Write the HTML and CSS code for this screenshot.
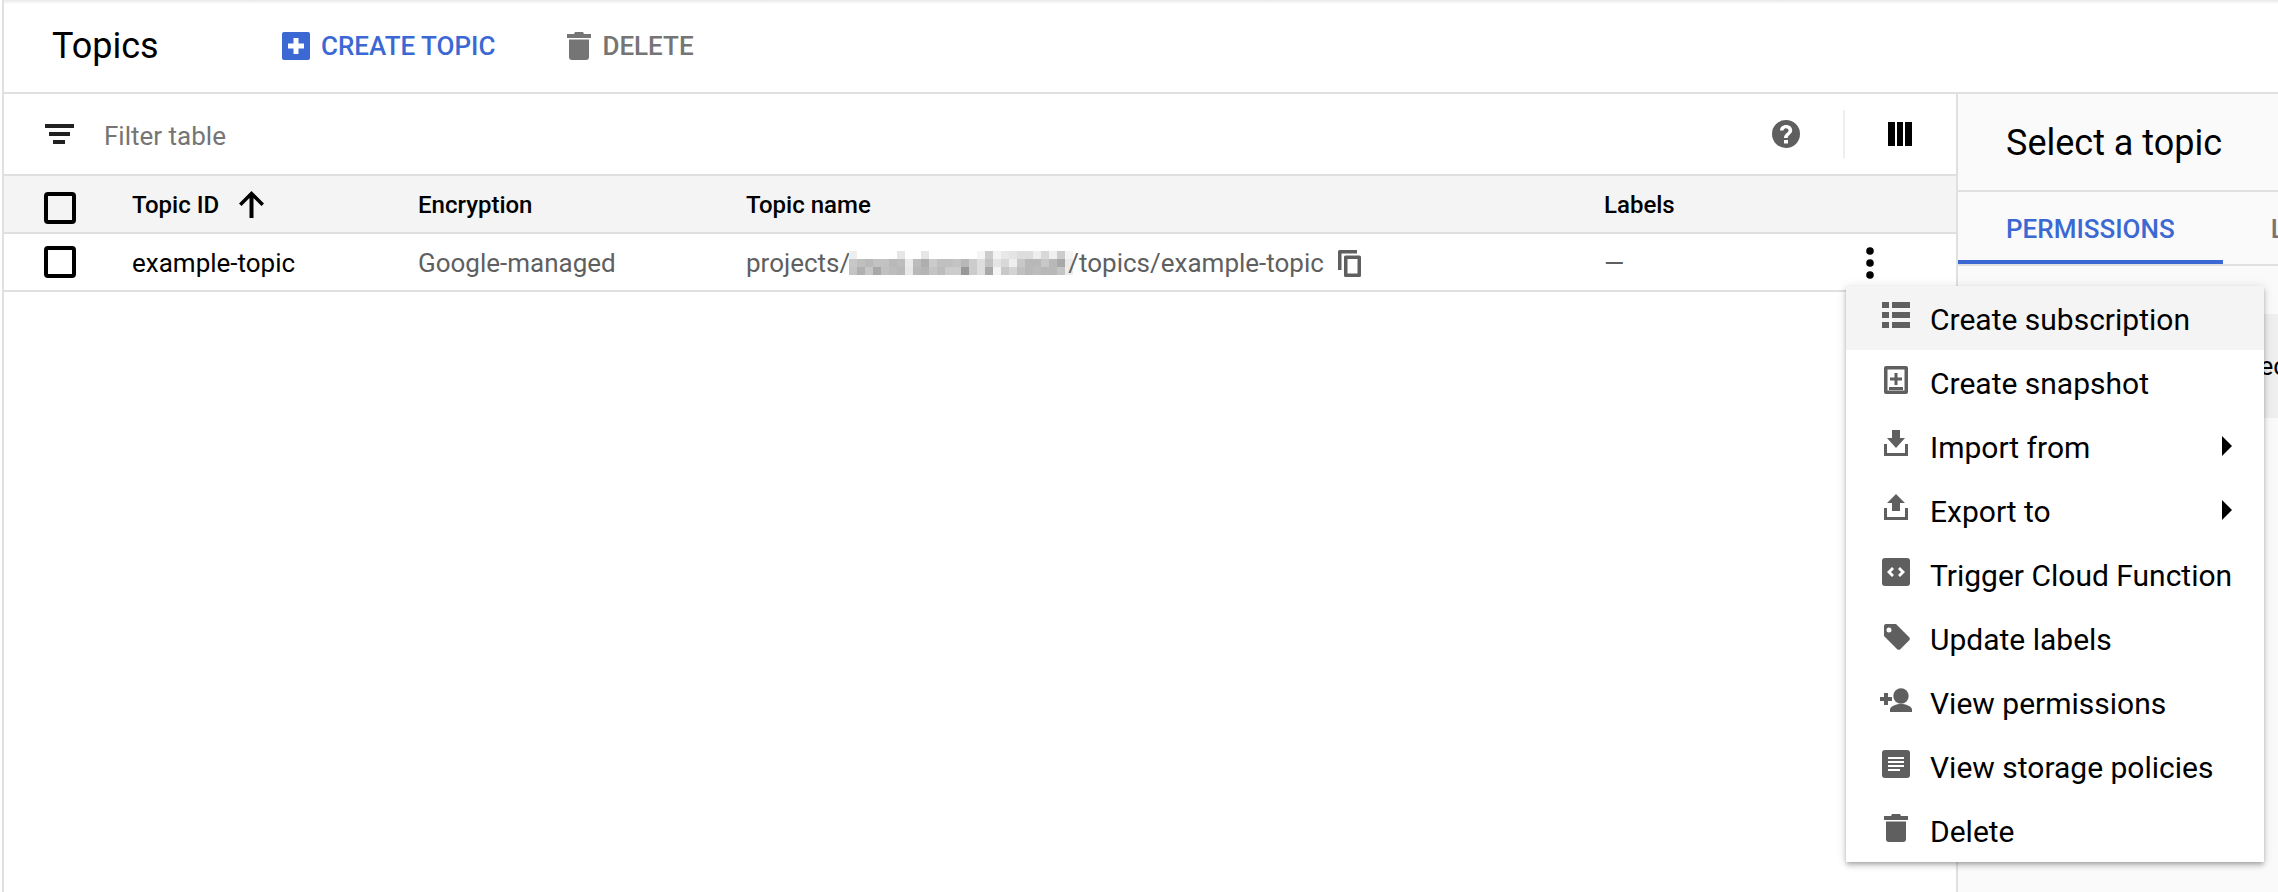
FILE: index.html
```html
<!DOCTYPE html>
<html lang="en">
<head>
  <meta charset="UTF-8" />
  <link rel="stylesheet" href="styles.css">
  <title>Topics</title>
</head>
<body>
<div class="page">
  <header class="topbar">
    <h1>Topics</h1>
    <button class="action action-create">
      <svg class="create-icon" viewBox="0 0 28 28"><path fill="#3b68d3" d="M2 0h24a2 2 0 0 1 2 2v24a2 2 0 0 1-2 2H2a2 2 0 0 1-2-2V2a2 2 0 0 1 2-2z"/><path fill="#fff" d="M11.500 6h5v5.500H22v5h-5.500V22h-5v-5.500H6v-5h5.500z"/></svg>
      CREATE TOPIC
    </button>
    <button class="action action-delete">
      <svg class="delete-icon" viewBox="0 0 24 28"><path fill="#757575" d="M8 0h8l1 2h7v4H0V2h7zM2 7.500h20V25a3 3 0 0 1-3 3H5a3 3 0 0 1-3-3z"/></svg>
      DELETE
    </button>
  </header>

  <div class="content">
    <main class="table-area">
      <div class="filter-bar">
        <svg class="filter-icon" viewBox="0 0 29 20"><path fill="#212121" d="M0 0h29v4H0zM4 8h21v4H4zM8 16h12v4H8z"/></svg>
        <span class="filter-text">Filter table</span>
        <svg class="help-icon" viewBox="0 0 28 28"><path fill="#5f5f5f" fill-rule="evenodd" d="M14 0a14 14 0 1 1 0 28 14 14 0 0 1 0-28zm-2 20v3.500h4V20zM14 5c-3.500 0-6 2.300-6 5.500h3.500c0-1.300 1-2.300 2.500-2.300s2.500 1 2.500 2.200c0 2.600-4.500 2.900-4.500 7.600h3.700c0-3.300 4.500-4 4.500-7.600C20.200 7.200 17.700 5 14 5z"/></svg>
        <span class="filter-sep"></span>
        <svg class="columns-icon" viewBox="0 0 24 24"><path fill="#000" d="M0 0h7v24H0zM9 0h6v24H9zM17 0h7v24h-7z"/></svg>
      </div>

      <div class="row row-head">
        <div class="cell-check"><span class="checkbox"></span></div>
        <div class="cell-id">Topic ID
          <svg class="sort-icon" viewBox="0 0 25 27"><path fill="#000" d="M10.500 27V7l-8 8L0 12.500 12.500 0 25 12.500 22.500 15l-8-8v20z"/></svg>
        </div>
        <div class="cell-enc">Encryption</div>
        <div class="cell-name">Topic name</div>
        <div class="cell-labels">Labels</div>
      </div>

      <div class="row row-body">
        <div class="cell-check"><span class="checkbox"></span></div>
        <div class="cell-id id-value">example-topic</div>
        <div class="cell-enc">Google-managed</div>
        <div class="cell-name">projects/<svg class="blurred" viewBox="0 0 224 24" shape-rendering="crispEdges">
            <!-- pixelated project id -->
            <rect x="0" y="0" width="8" height="8" fill="#eee"/><rect x="48" y="0" width="8" height="8" fill="#e6e6e6"/><rect x="72" y="0" width="8" height="8" fill="#e6e6e6"/><rect x="128" y="0" width="8" height="8" fill="#f5f5f5"/><rect x="136" y="0" width="8" height="8" fill="#ccc"/><rect x="144" y="0" width="8" height="8" fill="#f3f3f3"/><rect x="152" y="0" width="8" height="8" fill="#e8e8e8"/><rect x="160" y="0" width="8" height="8" fill="#e4e4e4"/><rect x="168" y="0" width="16" height="8" fill="#ddd"/><rect x="184" y="0" width="8" height="8" fill="#eee"/><rect x="192" y="0" width="8" height="8" fill="#d8d8d8"/><rect x="200" y="0" width="8" height="8" fill="#f0f0f0"/><rect x="208" y="0" width="8" height="8" fill="#ccc"/><rect x="216" y="0" width="8" height="8" fill="#f4f4f4"/>
            <rect x="0" y="8" width="8" height="8" fill="#c8c8c8"/><rect x="8" y="8" width="8" height="8" fill="#bfbfbf"/><rect x="16" y="8" width="8" height="8" fill="#b9b9b9"/><rect x="24" y="8" width="16" height="8" fill="#c2c2c2"/><rect x="40" y="8" width="8" height="8" fill="#b9b9b9"/><rect x="48" y="8" width="8" height="8" fill="#bcbcbc"/><rect x="56" y="8" width="8" height="8" fill="#eaeaea"/><rect x="64" y="8" width="8" height="8" fill="#bcbcbc"/><rect x="72" y="8" width="8" height="8" fill="#aeaeae"/><rect x="80" y="8" width="8" height="8" fill="#cbcbcb"/><rect x="88" y="8" width="16" height="8" fill="#c0c0c0"/><rect x="104" y="8" width="8" height="8" fill="#c4c4c4"/><rect x="112" y="8" width="8" height="8" fill="#b8b8b8"/><rect x="120" y="8" width="8" height="8" fill="#ccc"/><rect x="128" y="8" width="8" height="8" fill="#ddd"/><rect x="136" y="8" width="8" height="8" fill="#c2c2c2"/><rect x="144" y="8" width="8" height="8" fill="#e4e4e4"/><rect x="152" y="8" width="8" height="8" fill="#d8d8d8"/><rect x="160" y="8" width="8" height="8" fill="#eee"/><rect x="168" y="8" width="8" height="8" fill="#c8c8c8"/><rect x="176" y="8" width="16" height="8" fill="#b8b8b8"/><rect x="192" y="8" width="8" height="8" fill="#c8c8c8"/><rect x="200" y="8" width="8" height="8" fill="#b8b8b8"/><rect x="208" y="8" width="8" height="8" fill="#a8a8a8"/><rect x="216" y="8" width="8" height="8" fill="#eaeaea"/>
            <rect x="0" y="16" width="8" height="8" fill="#c4c4c4"/><rect x="8" y="16" width="8" height="8" fill="#b0b0b0"/><rect x="16" y="16" width="8" height="8" fill="#c6c6c6"/><rect x="24" y="16" width="8" height="8" fill="#a8a8a8"/><rect x="32" y="16" width="8" height="8" fill="#c0c0c0"/><rect x="40" y="16" width="8" height="8" fill="#bcbcbc"/><rect x="48" y="16" width="8" height="8" fill="#b8b8b8"/><rect x="56" y="16" width="8" height="8" fill="#e8e8e8"/><rect x="64" y="16" width="8" height="8" fill="#b8b8b8"/><rect x="72" y="16" width="8" height="8" fill="#b4b4b4"/><rect x="80" y="16" width="8" height="8" fill="#c4c4c4"/><rect x="88" y="16" width="8" height="8" fill="#bcbcbc"/><rect x="96" y="16" width="16" height="8" fill="#ccc"/><rect x="112" y="16" width="8" height="8" fill="#989898"/><rect x="120" y="16" width="8" height="8" fill="#ccc"/><rect x="128" y="16" width="8" height="8" fill="#ddd"/><rect x="136" y="16" width="8" height="8" fill="#a8a8a8"/><rect x="144" y="16" width="8" height="8" fill="#f4f4f4"/><rect x="152" y="16" width="8" height="8" fill="#c8c8c8"/><rect x="160" y="16" width="8" height="8" fill="#d4d4d4"/><rect x="168" y="16" width="8" height="8" fill="#c0c0c0"/><rect x="176" y="16" width="8" height="8" fill="#b8b8b8"/><rect x="184" y="16" width="8" height="8" fill="#bcbcbc"/><rect x="192" y="16" width="16" height="8" fill="#b8b8b8"/><rect x="208" y="16" width="8" height="8" fill="#c4c4c4"/><rect x="216" y="16" width="8" height="8" fill="#ececec"/>
          </svg>/topics/example-topic
          <svg class="copy-icon" viewBox="0 0 23 27"><path fill="#5f5f5f" d="M1.500 0H19v3.500H3.500V20H0V1.500A1.500 1.500 0 0 1 1.500 0z"/><path fill="#5f5f5f" fill-rule="evenodd" d="M7.500 5.500h14A1.500 1.500 0 0 1 23 7v18.500a1.500 1.500 0 0 1-1.500 1.500h-14A1.500 1.500 0 0 1 6 25.500V7a1.500 1.500 0 0 1 1.500-1.500zm2 3.500v14.500h10V9z"/></svg>
        </div>
        <div class="cell-labels">—</div>
        <svg class="more-icon" viewBox="0 0 8 32"><circle cx="4" cy="4" r="3.800"/><circle cx="4" cy="16" r="3.800"/><circle cx="4" cy="28" r="3.800"/></svg>
      </div>
    </main>

    <aside class="side-panel">
      <div class="side-title">Select a topic</div>
      <div class="side-tabs">
        <div class="tab tab-active">PERMISSIONS</div>
        <div class="tab">LABELS</div>
      </div>
      <div class="side-info">Selected</div>
    </aside>
  </div>

  <div class="menu">
    <div class="menu-item menu-item-hover">
      <svg class="menu-icon" viewBox="-2 0 32 28"><path d="M0 0h7v6H0zM10 0h18v6H10zM0 10h7v6H0zM10 10h18v6H10zM0 20h7v6H0zM10 20h18v6H10z"/></svg>
      Create subscription
    </div>
    <div class="menu-item">
      <svg class="menu-icon" viewBox="-2 0 32 28"><path fill-rule="evenodd" d="M4 0h20a2 2 0 0 1 2 2v24a2 2 0 0 1-2 2H4a2 2 0 0 1-2-2V2a2 2 0 0 1 2-2zm1.500 3.500v21h17v-21zm7 3.500h3v4.500H20v3h-4.500V19h-3v-4.500H8v-3h4.500zM7 21h14v3H7z"/></svg>
      Create snapshot
    </div>
    <div class="menu-item">
      <svg class="menu-icon" viewBox="-2 0 32 28"><path d="M10 0h8v8h5l-9 10L5 8h5zM2 14h3v9h18v-9h3v12H2z"/></svg>
      Import from
      <span class="submenu-arrow"></span>
    </div>
    <div class="menu-item">
      <svg class="menu-icon" viewBox="-2 0 32 28"><path d="M14 0l9 9h-5v8h-8V9H5zM2 14h3v9h18v-9h3v12H2z"/></svg>
      Export to
      <span class="submenu-arrow"></span>
    </div>
    <div class="menu-item">
      <svg class="menu-icon" viewBox="-2 0 32 28"><path fill-rule="evenodd" d="M3 0h22a3 3 0 0 1 3 3v22a3 3 0 0 1-3 3H3a3 3 0 0 1-3-3V3a3 3 0 0 1 3-3zm7 9l-5 5 5 5 2-2-3-3 3-3zm8 0l-2 2 3 3-3 3 2 2 5-5z"/></svg>
      Trigger Cloud Function
    </div>
    <div class="menu-item">
      <svg class="menu-icon" viewBox="-2 0 32 28"><path fill-rule="evenodd" d="M4 2h10l13 13a2.500 2.500 0 0 1 0 3.500L18.500 27a2.500 2.500 0 0 1-3.500 0L2 14V4a2 2 0 0 1 2-2zm3 3.500a2.500 2.500 0 1 0 0 5 2.500 2.500 0 0 0 0-5z"/></svg>
      Update labels
    </div>
    <div class="menu-item">
      <svg class="menu-icon" viewBox="-2 0 32 28"><circle cx="19" cy="10" r="7.700"/><path d="M8 26v-2.500c0-3.500 7-5.500 11-5.500s11 2 11 5.500V26zM2 7h4v4h4v4H6v4H2v-4h-4v-4h4z"/></svg>
      View permissions
    </div>
    <div class="menu-item">
      <svg class="menu-icon" viewBox="-2 0 32 28"><path fill-rule="evenodd" d="M3 0h22a3 3 0 0 1 3 3v22a3 3 0 0 1-3 3H3a3 3 0 0 1-3-3V3a3 3 0 0 1 3-3zm3 7v2h16V7zm0 4v2h16v-2zm0 4v2h16v-2zm0 4v2h12v-2z"/></svg>
      View storage policies
    </div>
    <div class="menu-item">
      <svg class="menu-icon" viewBox="-2 0 32 28"><path d="M10 0h8l1 2h7v4H2V2h7zM4 7.500h20V25a3 3 0 0 1-3 3H7a3 3 0 0 1-3-3z"/></svg>
      Delete
    </div>
  </div>
</div>
</body>
</html>
```

FILE: styles.css
```css
* {
  box-sizing: border-box;
}

body {
  margin: 0;
  font-family: Roboto, 'Liberation Sans', Arial, sans-serif;
  color: #000;
  background: #fff;
}

.page {
  position: relative;
  height: 892px;
  margin-left: 2px;
  overflow: hidden;
  border-left: 2px solid #e0e0e0;
}

/* Top bar */
.topbar {
  display: flex;
  align-items: center;
  height: 94px;
  padding-left: 48px;
  background: linear-gradient(#e8e8e8, #fff 4px);
  border-bottom: 2px solid #e0e0e0;
}

.topbar h1 {
  width: 230px;
  margin: 0;
  font-size: 36px;
  font-weight: 400;
}

.action {
  display: flex;
  align-items: center;
  padding: 0;
  border: none;
  background: none;
  font-family: inherit;
  font-size: 26px;
  font-weight: 500;
}

.action-create {
  gap: 11px;
  color: #3b68d3;
}

.create-icon {
  width: 28px;
  height: 28px;
}

.action-delete {
  gap: 11px;
  margin-left: 72px;
  color: #757575;
}

.delete-icon {
  width: 24px;
  height: 28px;
}

/* Main content */
.content {
  display: flex;
  height: 798px;
}

.table-area {
  width: 1952px;
  flex: none;
}

.filter-bar {
  display: flex;
  align-items: center;
  height: 82px;
  padding-left: 41px;
  border-bottom: 2px solid #e0e0e0;
}

.filter-icon {
  width: 29px;
  height: 20px;
}

.filter-text {
  flex: 1;
  margin-left: 30px;
  padding-top: 3px;
  color: #757575;
  font-size: 26px;
}

.help-icon {
  width: 28px;
  height: 28px;
}

.filter-sep {
  width: 2px;
  height: 48px;
  margin: 0 43px;
  background: #eee;
}

.columns-icon {
  width: 24px;
  height: 24px;
  margin-right: 44px;
}

/* Table rows */
.row {
  display: flex;
  align-items: center;
  height: 58px;
  padding-top: 2px;
  padding-left: 40px;
  border-bottom: 2px solid #e0e0e0;
}

.row-head {
  background: #f4f4f4;
  font-size: 24px;
  font-weight: 500;
}

.row-head .checkbox {
  margin-top: 5px;
}

.row-body {
  color: #5f5f5f;
  font-size: 26px;
}

.row-body .checkbox {
  margin-top: -2px;
}

.cell-check {
  display: flex;
  flex: none;
  width: 88px;
}

.checkbox {
  width: 32px;
  height: 32px;
  border: 4px solid #000;
  border-radius: 4px;
}

.cell-id {
  display: flex;
  flex: none;
  align-items: center;
  width: 286px;
}

.id-value {
  color: #000;
}

.sort-icon {
  width: 25px;
  height: 27px;
  margin: -2px 0 0 20px;
}

.cell-enc {
  flex: none;
  width: 328px;
}

.cell-name {
  display: flex;
  flex: none;
  align-items: center;
  width: 858px;
}

.blurred {
  width: 224px;
  height: 24px;
  margin: 0 -5px 0 -1px;
}

.copy-icon {
  width: 23px;
  height: 27px;
  margin-left: 14px;
}

.cell-labels {
  flex: none;
  width: 262px;
}

.more-icon {
  flex: none;
  width: 8px;
  height: 32px;
}

/* Side panel */
.side-panel {
  flex: 1;
  min-width: 0;
  background: #fafafa;
  border-left: 2px solid #e0e0e0;
}

.side-title {
  display: flex;
  align-items: center;
  height: 98px;
  padding: 2px 0 0 48px;
  border-bottom: 2px solid #e0e0e0;
  font-size: 36px;
}

.side-tabs {
  display: flex;
  height: 74px;
  border-bottom: 2px solid #e0e0e0;
  font-size: 26px;
  font-weight: 500;
}

.tab {
  display: flex;
  align-items: center;
  flex: none;
  height: 72px;
  padding: 6px 48px 0;
  border-bottom: 4px solid transparent;
  color: #757575;
}

.tab-active {
  color: #3b68d3;
  border-bottom-color: #3b68d3;
}

.side-info {
  display: flex;
  align-items: center;
  height: 104px;
  margin-top: 48px;
  padding-left: 266px;
  background: #efefef;
  font-size: 26px;
  white-space: nowrap;
}

/* Row actions menu */
.menu {
  position: absolute;
  left: 1842px;
  top: 286px;
  width: 418px;
  background: #fff;
  box-shadow: 0 2px 4px -1px rgba(0, 0, 0, 0.2), 0 4px 5px rgba(0, 0, 0, 0.14), 0 1px 10px rgba(0, 0, 0, 0.12);
}

.menu-item {
  display: flex;
  align-items: center;
  height: 64px;
  padding-top: 2px;
  padding-left: 34px;
  font-size: 30px;
}

.menu-item-hover {
  background: #f4f4f4;
}

.menu-icon {
  position: relative;
  top: -3px;
  flex: none;
  width: 32px;
  height: 28px;
  margin-right: 18px;
  fill: #5f5f5f;
}

.submenu-arrow {
  margin: -2px 32px 0 auto;
  border-left: 10px solid #000;
  border-top: 10px solid transparent;
  border-bottom: 10px solid transparent;
}
```
